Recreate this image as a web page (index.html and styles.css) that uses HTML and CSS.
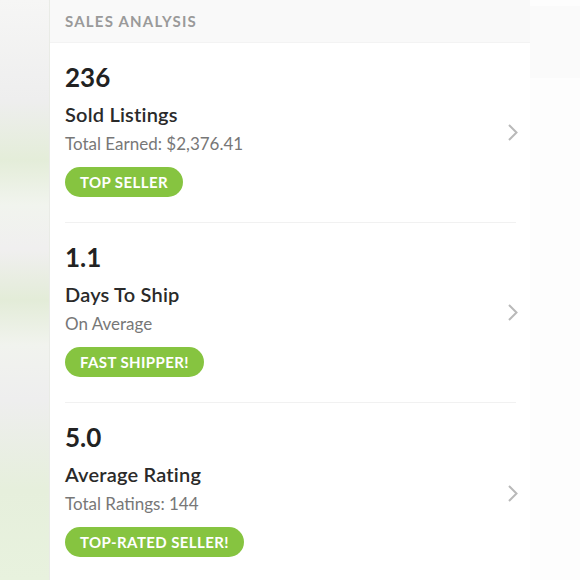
FILE: index.html
```html
<!DOCTYPE html>
<html>
<head>
<meta charset="utf-8">
<link rel="stylesheet" href="styles.css">
</head>
<body>
<div class="page">
  <div class="side-left"></div>
  <main class="panel">
    <div class="panel-header">SALES ANALYSIS</div>
    <div class="item">
      <div class="item-body">
        <div class="num">236</div>
        <div class="title">Sold Listings</div>
        <div class="sub">Total Earned: $2,376.41</div>
        <span class="badge">TOP SELLER</span>
      </div>
      <svg class="chev" width="10" height="17" viewBox="0 0 10 17"><polyline points="1,1 8.5,8.5 1,16" fill="none" stroke="#b9b9b9" stroke-width="2"/></svg>
    </div>
    <div class="item">
      <div class="item-body">
        <div class="num">1.1</div>
        <div class="title">Days To Ship</div>
        <div class="sub">On Average</div>
        <span class="badge">FAST SHIPPER!</span>
      </div>
      <svg class="chev" width="10" height="17" viewBox="0 0 10 17"><polyline points="1,1 8.5,8.5 1,16" fill="none" stroke="#b9b9b9" stroke-width="2"/></svg>
    </div>
    <div class="item last">
      <div class="item-body">
        <div class="num">5.0</div>
        <div class="title">Average Rating</div>
        <div class="sub">Total Ratings: 144</div>
        <span class="badge">TOP-RATED SELLER!</span>
      </div>
      <svg class="chev" width="10" height="17" viewBox="0 0 10 17"><polyline points="1,1 8.5,8.5 1,16" fill="none" stroke="#b9b9b9" stroke-width="2"/></svg>
    </div>
  </main>
  <div class="side-right"><div class="ghost"></div></div>
</div>
</body>
</html>
```
FILE: styles.css
```css
html, body {
  margin: 0;
  padding: 0;
  background: #ffffff;
}
body {
  font-family: "Lato", "Noto Sans", sans-serif;
  color: #222;
}
.page {
  display: flex;
  width: 580px;
  height: 580px;
  overflow: hidden;
}
.side-left {
  width: 50px;
  flex: none;
  background: linear-gradient(180deg, #f6f6f5 0px, #eeeeee 100px, #e4edd9 160px, #f1f4ee 205px, #f0efef 250px, #e3ecd8 300px, #f1f3ee 345px, #eeeeee 400px, #e6efdc 490px, #e8f2de 580px);
  box-shadow: inset -1px 0 0 #e9ebe6;
}
.panel {
  width: 480px;
  flex: none;
  background: #fff;
}
.panel-header {
  height: 43px;
  box-sizing: border-box;
  background: #f9f9f9;
  border-bottom: 1px solid #f3f3f3;
  padding: 12px 0 0 15px;
  font-size: 15px;
  line-height: 18px;
  font-weight: 700;
  letter-spacing: 1.2px;
  color: #9a9a9a;
}
.item {
  display: flex;
  align-items: center;
  margin: 0 14px 0 15px;
  height: 180px;
  box-sizing: border-box;
  border-bottom: 1px solid #f1f1f1;
}
.item:first-of-type { height: 179px; }
.item.last { border-bottom: none; }
.item-body {
  flex: 1;
  align-self: stretch;
  display: flex;
  flex-direction: column;
  align-items: flex-start;
  padding-top: 19px;
}
.num {
  font-size: 26px;
  font-weight: 700;
  line-height: 30px;
  color: #222;
}
.title {
  margin-top: 10px;
  font-size: 20px;
  font-weight: 600;
  line-height: 24px;
  letter-spacing: 0.2px;
  color: #2a2a2a;
}
.sub {
  margin-top: 7px;
  font-size: 17px;
  line-height: 22px;
  color: #777;
}
.badge {
  margin-top: 12px;
  height: 30px;
  line-height: 30px;
  padding: 0 15px;
  border-radius: 15px;
  background: #86c440;
  color: #fff;
  font-size: 15px;
  font-weight: 700;
  letter-spacing: 0.4px;
}
.chev {
  flex: none;
  margin-right: -2px;
}
.side-right {
  width: 50px;
  flex: none;
  background: #fdfdfd;
  padding-top: 6px;
}
.ghost {
  height: 72px;
  background: #fafafa;
}
```
